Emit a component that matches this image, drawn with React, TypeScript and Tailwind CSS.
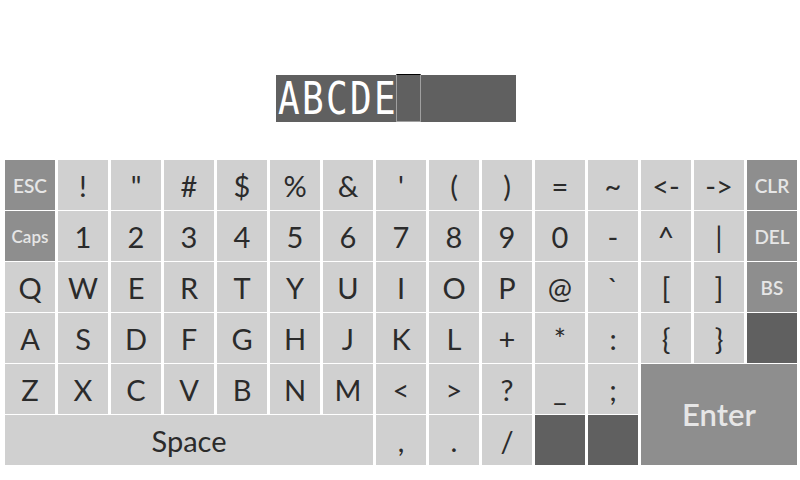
type Tone = 'light' | 'mid' | 'dark'

type KeyDef = { label: string; tone?: Tone; span?: string }

const ROWS: KeyDef[][] = [
  [
    { label: 'ESC', tone: 'mid' }, { label: '!' }, { label: '"' }, { label: '#' }, { label: '$' },
    { label: '%' }, { label: '&' }, { label: "'" }, { label: '(' }, { label: ')' },
    { label: '=' }, { label: '~' }, { label: '<-' }, { label: '->' }, { label: 'CLR', tone: 'mid' },
  ],
  [
    { label: 'Caps', tone: 'mid' }, { label: '1' }, { label: '2' }, { label: '3' }, { label: '4' },
    { label: '5' }, { label: '6' }, { label: '7' }, { label: '8' }, { label: '9' },
    { label: '0' }, { label: '-' }, { label: '^' }, { label: '|' }, { label: 'DEL', tone: 'mid' },
  ],
  [
    { label: 'Q' }, { label: 'W' }, { label: 'E' }, { label: 'R' }, { label: 'T' },
    { label: 'Y' }, { label: 'U' }, { label: 'I' }, { label: 'O' }, { label: 'P' },
    { label: '@' }, { label: '`' }, { label: '[' }, { label: ']' }, { label: 'BS', tone: 'mid' },
  ],
  [
    { label: 'A' }, { label: 'S' }, { label: 'D' }, { label: 'F' }, { label: 'G' },
    { label: 'H' }, { label: 'J' }, { label: 'K' }, { label: 'L' }, { label: '+' },
    { label: '*' }, { label: ':' }, { label: '{' }, { label: '}' }, { label: '', tone: 'dark' },
  ],
  [
    { label: 'Z' }, { label: 'X' }, { label: 'C' }, { label: 'V' }, { label: 'B' },
    { label: 'N' }, { label: 'M' }, { label: '<' }, { label: '>' }, { label: '?' },
    { label: '_' }, { label: ';' },
    { label: 'Enter', tone: 'mid', span: 'col-span-3 row-span-2 text-[31px]' },
  ],
  [
    { label: 'Space', span: 'col-span-7' }, { label: ',' }, { label: '.' }, { label: '/' },
    { label: '', tone: 'dark' }, { label: '', tone: 'dark' },
  ],
]

const TONES: Record<Tone, string> = {
  light: 'bg-[#d0d0d0] text-[#2b2b2b] text-[29px]',
  mid: 'bg-[#8e8e8e] text-[#e6e6e6] font-semibold',
  dark: 'bg-[#606060]',
}

export default function App() {
  return (
    <div className="w-[800px] h-[480px] bg-white overflow-hidden" style={{ fontFamily: 'Lato, "Open Sans", sans-serif' }}>
      {/* Input display */}
      <div className="pt-[75px] pl-[276px]">
        <div className="w-[240px] h-[47px] bg-[#606060] flex items-center pl-[2px]">
          <span
            className="text-white text-[36px] leading-none tracking-[2.3px] scale-y-[1.25] origin-center"
            style={{ fontFamily: '"DejaVu Sans Mono", monospace' }}
          >
            ABCDE
          </span>
          <div className="w-[25px] h-[48px] -mt-[1px] -ml-[2px] border border-[#a0a0a0] border-t-black" />
        </div>
      </div>

      {/* Keyboard */}
      <div className="mt-[38px] ml-[5px] grid grid-cols-[repeat(15,50px)] grid-rows-[repeat(6,50px)] gap-x-[3px] gap-y-[1px]">
        {ROWS.flat().map((k, i) => {
          const tone = k.tone ?? 'light'
          const size = tone === 'mid' && !k.span ? (k.label === 'Caps' ? 'text-[17px]' : 'text-[19px]') : ''
          return (
            <div
              key={i}
              className={`flex items-center justify-center leading-none ${TONES[tone]} ${size} ${k.span ?? ''}`}
            >
              {k.label}
            </div>
          )
        })}
      </div>
    </div>
  )
}
